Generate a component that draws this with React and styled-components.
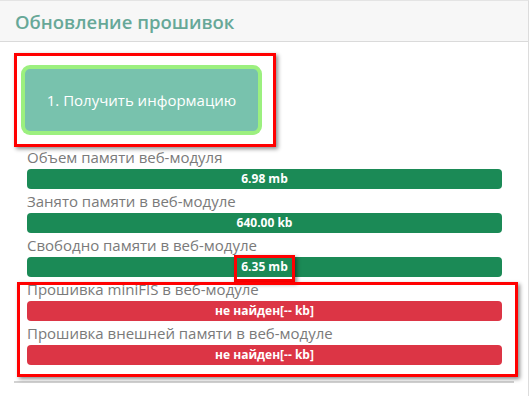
import React from 'react';
import styled, { createGlobalStyle, css } from 'styled-components';

const GlobalStyle = createGlobalStyle`
  html, body {
    margin: 0;
    padding: 0;
    background: #ffffff;
    font-family: 'Open Sans', 'Noto Sans', sans-serif;
  }
`;

// red annotation frame drawn over a part of the page
const markFrame = css`
  position: relative;

  &::after {
    content: '';
    position: absolute;
    border: 3px solid #ff0000;
    box-shadow: 2px 2px 4px rgba(0, 0, 0, 0.45);
    pointer-events: none;
  }
`;

const Card = styled.div`
  width: 529px;
  min-height: 396px;
  box-sizing: border-box;
  border-top: 1px solid #e4e4e4;
  border-right: 1px solid #dcdcdc;
  background: #ffffff;
`;

const CardHeader = styled.div`
  height: 40px;
  display: flex;
  align-items: center;
  padding-left: 15px;
  background: #f7f7f7;
  border-bottom: 1px solid #dadada;
  color: #67a898;
  font-size: 18.5px;
  font-weight: 600;
`;

const CardBody = styled.div`
  padding: 0 0 0 14px;
`;

const Panel = styled.div`
  width: 500px;
  padding-bottom: 16px;
  border-bottom: 2px solid #d2d2d2;
`;

const ActionFrame = styled.div`
  ${markFrame}
  padding: 27px 0 15px 11px;

  &::after {
    left: 0;
    top: 11px;
    width: 262px;
    height: 94px;
    box-sizing: border-box;
  }
`;

const ActionButton = styled.button`
  width: 233px;
  height: 62px;
  border: none;
  border-radius: 5px;
  background: #78c2ad;
  box-shadow: 0 0 0 4px #9cf07f;
  color: #ffffff;
  font-family: 'Open Sans', 'Noto Sans', sans-serif;
  font-size: 15px;
  cursor: pointer;
`;

const Stats = styled.div`
  padding-left: 13px;
  width: 475px;
  margin-top: -1px;
`;

const Group = styled.div`
  ${markFrame}

  &::after {
    left: -10px;
    right: -16px;
    top: 5px;
    bottom: -12px;
  }
`;

const Label = styled.div`
  height: 24px;
  line-height: 24px;
  font-size: 15px;
  color: #7a7a7a;
  white-space: nowrap;
`;

const Bar = styled.div`
  height: 20px;
  border-radius: 4px;
  background: ${(p) => (p.$danger ? '#dc3545' : '#1b8a56')};
  display: flex;
  align-items: center;
  justify-content: center;
  color: #ffffff;
  font-size: 12px;
  font-weight: 700;
`;

const BarValue = styled.span`
  line-height: 20px;
  ${(p) => p.$marked && css`
    ${markFrame}

    &::after {
      left: -7px;
      right: -7px;
      top: -2px;
      bottom: -5px;
    }
  `}
`;

const memory = [
  { label: 'Объем памяти веб-модуля', value: '6.98 mb' },
  { label: 'Занято памяти в веб-модуле', value: '640.00 kb' },
  { label: 'Свободно памяти в веб-модуле', value: '6.35 mb', marked: true },
];

const firmware = [
  { label: 'Прошивка miniFIS в веб-модуле', value: 'не найден[-- kb]' },
  { label: 'Прошивка внешней памяти в веб-модуле', value: 'не найден[-- kb]' },
];

const App = () => {
  return (
    <>
      <GlobalStyle />
      <Card>
        <CardHeader>Обновление прошивок</CardHeader>
        <CardBody>
          <Panel>
            <ActionFrame>
              <ActionButton>1. Получить информацию</ActionButton>
            </ActionFrame>

            <Stats>
              {memory.map((row) => (
                <div key={row.label}>
                  <Label>{row.label}</Label>
                  <Bar>
                    <BarValue $marked={row.marked}>{row.value}</BarValue>
                  </Bar>
                </div>
              ))}

              <Group>
                {firmware.map((row) => (
                  <div key={row.label}>
                    <Label>{row.label}</Label>
                    <Bar $danger>
                      <BarValue>{row.value}</BarValue>
                    </Bar>
                  </div>
                ))}
              </Group>
            </Stats>
          </Panel>
        </CardBody>
      </Card>
    </>
  );
};

export default App;
